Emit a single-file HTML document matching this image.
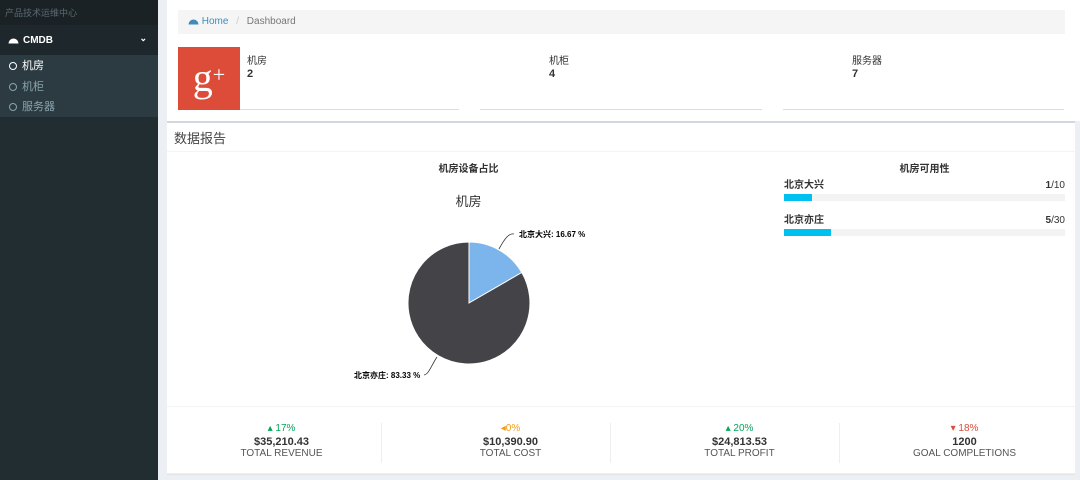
<!DOCTYPE html><html><head><meta charset="utf-8"><style>
*{box-sizing:border-box;margin:0;padding:0}
body{width:1080px;height:480px;overflow:hidden;font-family:"Liberation Sans","Noto Sans CJK SC",sans-serif;background:#ecf0f5;position:relative;font-size:11px;color:#333}
.sb{position:absolute;left:0;top:0;width:158px;height:480px;background:#222d32}
.sb .t{height:25px;background:#1a2226;color:#5b6a71;font-size:9px;padding:6px 5px}
.sb .c{height:30px;background:#1e282c;color:#fff;font-weight:bold;font-size:10px;padding:10px 8px;position:relative}
.sb .sub{background:#2c3b41;height:62px;padding-top:4px}
.sb .sub div{height:20.5px;color:#8aa4af;font-size:11px;padding-left:9px;line-height:15px}
.sb .sub div.a{color:#fff}
.o{display:inline-block;width:8px;height:8px;border:1.5px solid currentColor;border-radius:50%;margin-right:5px;vertical-align:-1px}
.main{position:absolute;left:167px;top:0;width:913px;height:121px;background:#fff}
.bc{position:absolute;left:11px;top:10px;width:887px;height:24px;background:#f5f5f5;font-size:10px;padding:6px 10px;color:#777}
.bc a{color:#3c8dbc}
.ib{position:absolute;top:47px;height:63px;border-bottom:1px solid #ddd;background:#fff}
.ib .l{font-size:10px;color:#333;position:absolute;top:5px}
.ib .n{font-weight:bold;font-size:11px;position:absolute;top:21px}
.box{position:absolute;left:167px;top:121px;width:908px;height:352px;background:#fff;border-top:2px solid #d2d6de}
.box h3{font-weight:normal;font-size:13px;color:#444;padding:5px 7px;height:29px;border-bottom:1px solid #f4f4f4}
.ft{position:absolute;left:0;top:283px;width:908px;height:69px;border-top:1px solid #f4f4f4;border-bottom:1px solid #e4e4e4}
.ft div{position:absolute;top:16px;width:229px;text-align:center;font-size:10px;line-height:12.5px}
.ft b{font-size:11px;color:#333;display:block}
.ft span{color:#555}
.sep{position:absolute;top:12px;height:40px;border-left:1px solid #eee}
.pb{position:absolute;left:617px;width:281px}
.pb .h{display:flex;justify-content:space-between;align-items:flex-end;font-size:10px;color:#333;line-height:12px}
.pb .bar{height:7px;background:#f3f3f3;margin-top:2px}
.pb .bar i{display:block;height:7px;background:#00c0ef}
</style></head><body>
<div class="sb"><div class="t">产品技术运维中心</div>
<div class="c"><svg width="11" height="9" viewBox="0 0 11 9" style="vertical-align:-1px;margin-right:4px"><path d="M0.5 8.5A5 5 0 0 1 10.5 8.5Z" fill="#fff"/></svg>CMDB<span style="position:absolute;right:11px;top:8px;font-size:9px">&#8964;</span></div>
<div class="sub"><div class="a"><span class="o"></span>机房</div><div><span class="o"></span>机柜</div><div><span class="o"></span>服务器</div></div></div>
<div class="main">
<div class="bc"><a><svg width="11" height="8" viewBox="0 0 11 8" style="vertical-align:-1px"><path d="M0.5 7.5A5 5 0 0 1 10.5 7.5Z" fill="#3c8dbc"/></svg> Home</a> <span style="color:#ccc;margin:0 5px">/</span> Dashboard</div>
<div class="ib" style="left:11px;width:281px"><div style="position:absolute;left:0;top:0;width:62px;height:63px;background:#dd4b39;color:#fff;font-family:'Liberation Serif',serif;font-size:40px;text-align:center;line-height:56px">g<span style="font-size:22px;vertical-align:9px">+</span></div><div class="l" style="left:69px">机房</div><div class="n" style="left:69px">2</div></div>
<div class="ib" style="left:313px;width:282px"><div class="l" style="left:69px">机柜</div><div class="n" style="left:69px">4</div></div>
<div class="ib" style="left:616px;width:281px"><div class="l" style="left:69px">服务器</div><div class="n" style="left:69px">7</div></div>
</div>
<div style="position:absolute;left:1075px;top:121px;width:5px;height:359px;background:#ecf0f5"></div>
<div class="box"><h3>数据报告</h3>
<div style="position:absolute;left:0;width:603px;top:37px;text-align:center;font-weight:bold;font-size:10px">机房设备占比</div>
<div style="position:absolute;left:0;width:603px;top:68px;text-align:center;font-size:13px;color:#333">机房</div>
<svg style="position:absolute;left:173px;top:85px" width="300" height="180" viewBox="340 206 300 180">
<path d="M469 301L469 240A61 61 0 0 1 521.8 270.5Z" fill="#7cb5ec" stroke="#fff" stroke-width="1"/>
<path d="M469 301L521.8 270.5A61 61 0 1 1 469 240Z" fill="#434348" stroke="#fff" stroke-width="1"/>
<path d="M499 247C505 236 509 231 514 232" fill="none" stroke="#333" stroke-width="0.8"/>
<path d="M437 355C431 364 429 372 424 373" fill="none" stroke="#333" stroke-width="0.8"/>
<text x="519" y="235" font-size="8" font-weight="bold" fill="#000">北京大兴: 16.67 %</text>
<text x="354" y="376" font-size="8" font-weight="bold" fill="#000">北京亦庄: 83.33 %</text>
</svg>
<div style="position:absolute;left:617px;width:281px;top:37px;text-align:center;font-weight:bold;font-size:10px">机房可用性</div>
<div class="pb" style="top:57px"><div class="h"><b>北京大兴</b><span><b>1</b>/10</span></div><div class="bar"><i style="width:10%"></i></div></div>
<div class="pb" style="top:92px"><div class="h"><b>北京亦庄</b><span><b>5</b>/30</span></div><div class="bar"><i style="width:16.7%"></i></div></div>
<div class="ft">
<div style="left:0"><p style="color:#00a65a">&#9652; 17%</p><b>$35,210.43</b><span>TOTAL REVENUE</span></div>
<div class="sep" style="left:214px"></div>
<div style="left:229px"><p style="color:#f39c12">&#9666;0%</p><b>$10,390.90</b><span>TOTAL COST</span></div>
<div class="sep" style="left:443px"></div>
<div style="left:458px"><p style="color:#00a65a">&#9652; 20%</p><b>$24,813.53</b><span>TOTAL PROFIT</span></div>
<div class="sep" style="left:672px"></div>
<div style="left:683px"><p style="color:#dd4b39">&#9662; 18%</p><b>1200</b><span>GOAL COMPLETIONS</span></div>
</div></div>
</body></html>
